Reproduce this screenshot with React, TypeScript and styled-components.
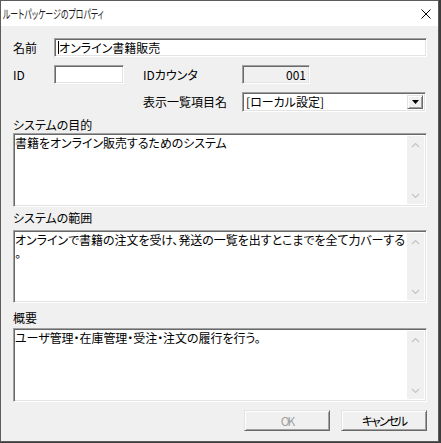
import React from "react";
import styled, { createGlobalStyle, css } from "styled-components";

const Global = createGlobalStyle`
  html, body { margin: 0; padding: 0; background: #3c3c3c; }
  body {
    width: 441px; height: 443px; overflow: hidden;
    font-family: "Noto Sans CJK JP", "Noto Sans", sans-serif;
    font-size: 12px; color: #000;
    font-feature-settings: "palt";
  }
`;

const sunken = css`
  box-sizing: border-box;
  border-style: solid;
  border-width: 1px;
  border-color: #a0a0a0 #ffffff #ffffff #a0a0a0;
  box-shadow: inset 1px 1px 0 #696969, inset -1px -1px 0 #e3e3e3;
`;

const raised = css`
  box-sizing: border-box;
  border-style: solid;
  border-width: 1px;
  border-color: #e3e3e3 #696969 #696969 #e3e3e3;
  box-shadow: inset 1px 1px 0 #ffffff, inset -1px -1px 0 #a0a0a0;
`;

const Window = styled.div`
  width: 439px;
  height: 442px;
  box-sizing: border-box;
  border: 1px solid #5c5c5c;
  background: #f0f0f0;
  display: flex;
  flex-direction: column;
`;

const TitleBar = styled.div`
  height: 25px;
  flex-shrink: 0;
  background: #ffffff;
  display: flex;
  align-items: center;
  justify-content: space-between;
  padding: 0 7px 0 2px;
`;

const Title = styled.span`
  font-size: 12px;
  line-height: 14px;
  white-space: nowrap;
  display: inline-block;
  transform: scaleX(0.66);
  transform-origin: left center;
  color: #1a1a1a;
`;

const Body = styled.div`
  flex: 1;
  display: flex;
  flex-direction: column;
  padding: 12px 11px 0 12px;
`;

const FieldGrid = styled.div`
  display: grid;
  grid-template-columns: 41px 70px 19px 99px 1fr;
  grid-template-rows: 19px 19px 20px;
  row-gap: 8px;
  align-items: center;
`;

const Label = styled.span<{ $col: string }>`
  grid-column: ${(p) => p.$col};
  line-height: 14px;
  white-space: nowrap;
`;

const TextInput = styled.div<{ $col: string }>`
  ${sunken};
  grid-column: ${(p) => p.$col};
  height: 100%;
  background: #ffffff;
  display: flex;
  align-items: center;
  padding-left: 3px;
  line-height: 14px;
  white-space: nowrap;
`;

const Caret = styled.span`
  width: 1px;
  height: 13px;
  background: #000;
  flex-shrink: 0;
`;

const Counter = styled.div`
  ${sunken};
  grid-column: 5;
  width: 68px;
  height: 100%;
  background: #f0f0f0;
  display: flex;
  align-items: center;
  justify-content: flex-end;
  padding-right: 3px;
  line-height: 14px;
`;

const Select = styled.div`
  ${sunken};
  grid-column: 5;
  width: 184px;
  height: 100%;
  background: #ffffff;
  display: flex;
  align-items: stretch;
  padding: 2px 2px 2px 3px;
`;

const SelectText = styled.span`
  flex: 1;
  display: flex;
  align-items: center;
  line-height: 14px;
`;

const DropButton = styled.div`
  ${raised};
  width: 16px;
  background: #f0f0f0;
  display: flex;
  align-items: center;
  justify-content: center;
`;

const Section = styled.div<{ $mt: number; $gap: number; $h: number }>`
  display: flex;
  flex-direction: column;
  margin-top: ${(p) => p.$mt}px;
  gap: ${(p) => p.$gap}px;
  & > :last-child {
    height: ${(p) => p.$h}px;
  }
`;

const SectionLabel = styled.div`
  line-height: 14px;
  height: 14px;
`;

const TextBox = styled.div`
  ${sunken};
  display: flex;
  background: #ffffff;
  padding: 2px 2px 2px 1px;
`;

const TextContent = styled.div`
  flex: 1;
  min-width: 0;
  line-height: 13px;
  white-space: pre;
  letter-spacing: -0.05px;
`;

const ScrollBar = styled.div`
  width: 17px;
  flex-shrink: 0;
  background: #f0f0f0;
  display: flex;
  flex-direction: column;
  justify-content: space-between;
`;

const ScrollArrow = styled.div`
  height: 17px;
  display: flex;
  align-items: center;
  justify-content: center;
`;

const ButtonRow = styled.div`
  display: flex;
  justify-content: flex-end;
  gap: 11px;
  margin-top: 8px;
`;

const Button = styled.div<{ $disabled?: boolean }>`
  ${raised};
  width: 86px;
  height: 21px;
  background: #f0f0f0;
  display: flex;
  align-items: center;
  justify-content: center;
  line-height: 14px;
  letter-spacing: -2px;
  color: ${(p) => (p.$disabled ? "#a0a0a0" : "#000000")};
`;

const Chevron = ({ up }: { up?: boolean }) => (
  <svg width="9" height="6" viewBox="0 0 9 6">
    <path
      d={up ? "M1 5 L4.5 1.5 L8 5" : "M1 1 L4.5 4.5 L8 1"}
      fill="none"
      stroke="#c4c4c4"
      strokeWidth="1.2"
    />
  </svg>
);

const Multi = ({ text }: { text: string }) => (
  <TextBox>
    <TextContent>{text}</TextContent>
    <ScrollBar>
      <ScrollArrow>
        <Chevron up />
      </ScrollArrow>
      <ScrollArrow>
        <Chevron />
      </ScrollArrow>
    </ScrollBar>
  </TextBox>
);

export default function App() {
  return (
    <>
      <Global />
      <Window>
        <TitleBar>
          <Title>ルートパッケージのプロパティ</Title>
          <svg width="10" height="10" viewBox="0 0 10 10">
            <path d="M0.5 0.5 L9.5 9.5 M9.5 0.5 L0.5 9.5" stroke="#000" strokeWidth="1" />
          </svg>
        </TitleBar>
        <Body>
          <FieldGrid>
            <Label $col="1">名前</Label>
            <TextInput $col="2 / 6">
              <Caret />
              オンライン書籍販売
            </TextInput>

            <Label $col="1">ID</Label>
            <TextInput $col="2" />
            <Label $col="4">IDカウンタ</Label>
            <Counter>001</Counter>

            <Label $col="4">表示一覧項目名</Label>
            <Select>
              <SelectText>[ローカル設定]</SelectText>
              <DropButton>
                <svg width="7" height="4" viewBox="0 0 7 4">
                  <path d="M0 0 H7 L3.5 4 Z" fill="#000" />
                </svg>
              </DropButton>
            </Select>
          </FieldGrid>

          <Section $mt={6} $gap={1} $h={74}>
            <SectionLabel>システムの目的</SectionLabel>
            <Multi text="書籍をオンライン販売するためのシステム" />
          </Section>

          <Section $mt={4} $gap={5} $h={73}>
            <SectionLabel>システムの範囲</SectionLabel>
            <Multi text={"オンラインで書籍の注文を受け、発送の一覧を出すとこまでを全て力バーする\n。"} />
          </Section>

          <Section $mt={8} $gap={3} $h={74}>
            <SectionLabel>概要</SectionLabel>
            <Multi text="ユーザ管理・在庫管理・受注・注文の履行を行う。" />
          </Section>

          <ButtonRow>
            <Button $disabled>OK</Button>
            <Button>キャンセル</Button>
          </ButtonRow>
        </Body>
      </Window>
    </>
  );
}
